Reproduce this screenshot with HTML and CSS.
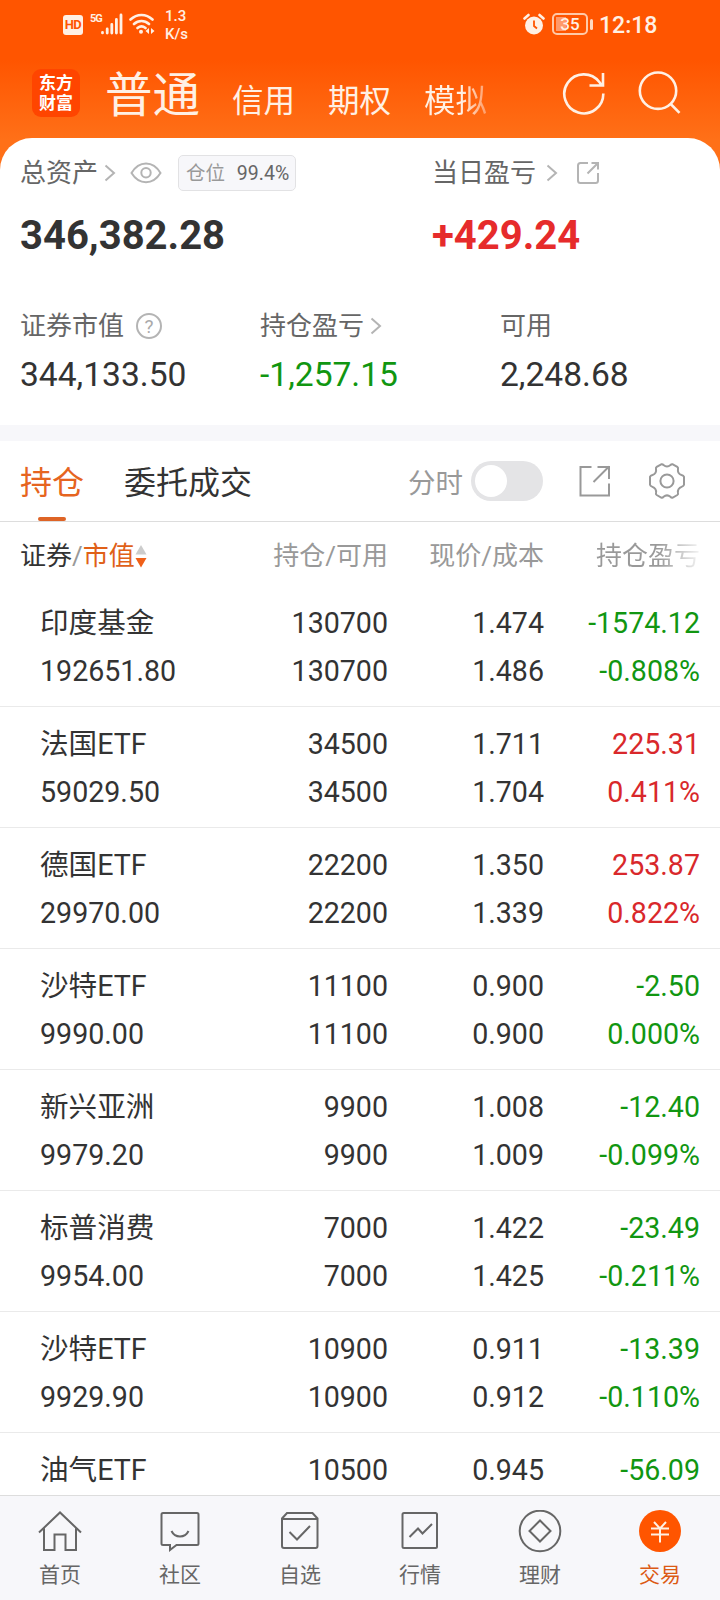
FILE: index.html
```html
<!DOCTYPE html>
<html lang="zh-CN">
<head>
    <meta charset="UTF-8">
    <meta name="viewport" content="width=device-width, initial-scale=1.0">
    <title>交易 - 持仓</title>
    <link rel="stylesheet" href="styles.css">
</head>
<body>
    <header>
        <!-- 状态栏 -->
        <div class="status-bar">
            <span class="hd">HD</span>
            <span class="net">5G</span>
            <svg class="signal" width="22" height="22" viewBox="0 0 22 22" fill="none" stroke="currentColor" stroke-width="2.8" stroke-linecap="round">
                <path d="M1.5 19.5v.4M6.2 16v4M10.8 11.5V20M15.4 6.5V20M20 2v18"/>
            </svg>
            <svg class="wifi" width="26" height="22" viewBox="0 0 26 22" fill="none" stroke="currentColor" stroke-width="2.6" stroke-linecap="round">
                <path d="M1.5 6.5C8 .4 17 .4 23.5 6.5M5 11c4.500-4 10.500-4 15 0M8.500 15c2.500-2 5.500-2 8 0"/>
                <circle cx="12" cy="18.700" r="2" fill="currentColor" stroke="none"/>
                <path d="M20 15v6l-3.500-3zM22 15v6l3.500-3z" fill="currentColor" stroke="none"/>
            </svg>
            <div class="speed">1.3<br>K/s</div>
            <svg class="alarm" width="22" height="22" viewBox="0 0 22 22">
                <circle cx="11" cy="12.500" r="9" fill="currentColor"/>
                <path d="M1.500 5.500L5.500 2M20.500 5.500L16.500 2" stroke="currentColor" stroke-width="2.600" stroke-linecap="round"/>
                <path d="M11 7.500v5.500l3 2.500" fill="none" stroke="#ff5500" stroke-width="1.800"/>
            </svg>
            <div class="battery"><span>35</span></div>
            <span class="time">12:18</span>
        </div>

        <div class="nav-top">
            <div class="logo">东方<br>财富</div>
            <div class="account-tabs">
                <span class="current">普通</span>
                <span>信用</span>
                <span>期权</span>
                <span class="fade">模拟</span>
            </div>
            <svg class="refresh" width="44" height="44" viewBox="0 0 44 44" fill="none" stroke="currentColor" stroke-width="2.600">
                <path d="M41.300 22.500A19.500 19.500 0 1 1 37.300 11L40 14.500M41 2v12.500H27.500"/>
            </svg>
            <svg width="44" height="44" viewBox="0 0 44 44" fill="none" stroke="currentColor" stroke-width="2.600">
                <circle cx="20" cy="19.700" r="18.200"/>
                <path d="M32.700 33L41.500 41.800"/>
            </svg>
        </div>
    </header>

    <main>
        <!-- 资产概况 -->
        <section class="assets">
            <div class="assets-main">
                <div>
                    <div class="label">
                        总资产
                        <svg class="arrow" width="12" height="18" viewBox="0 0 12 18"><path d="M1.500 1.500L10 9l-8.500 7.500"/></svg>
                        <svg class="eye" width="32" height="22" viewBox="0 0 32 22"><path d="M1.500 11C9-1.700 23-1.700 30.500 11 23 23.200 9 23.200 1.500 11z"/><circle cx="16" cy="10.800" r="4.700"/></svg>
                        <span class="badge">仓位 <b>99.4%</b></span>
                    </div>
                    <div class="total">346,382.28</div>
                </div>
                <div>
                    <div class="label">
                        当日盈亏
                        <svg class="arrow wide" width="12" height="18" viewBox="0 0 12 18"><path d="M1.500 1.500L10 9l-8.500 7.500"/></svg>
                        <svg class="share" width="24" height="24" viewBox="0 0 24 24"><path d="M12 2H4.500A2.500 2.500 0 0 0 2 4.500v15A2.500 2.500 0 0 0 4.500 22h15a2.500 2.500 0 0 0 2.500-2.500V12M11.500 12.500L22 2M15.500 2H22v6.500"/></svg>
                    </div>
                    <div class="total up">+429.24</div>
                </div>
            </div>
            <div class="assets-sub">
                <div>
                    <div class="label">证券市值 <span class="help">?</span></div>
                    <div class="value">344,133.50</div>
                </div>
                <div>
                    <div class="label">
                        持仓盈亏
                        <svg class="arrow" width="12" height="18" viewBox="0 0 12 18"><path d="M1.500 1.500L10 9l-8.500 7.500"/></svg>
                    </div>
                    <div class="value down">-1,257.15</div>
                </div>
                <div>
                    <div class="label">可用</div>
                    <div class="value">2,248.68</div>
                </div>
            </div>
        </section>

        <!-- 持仓 / 委托成交 -->
        <div class="tabs">
            <div class="tab active">持仓</div>
            <div class="tab">委托成交</div>
            <span class="switch-label">分时</span>
            <div class="switch"></div>
            <svg class="export" width="32" height="32" viewBox="0 0 32 32"><path d="M12.500 2H1.500v28.500H30V18.500M14.500 17L30 1.500M18.500 2H30v12"/></svg>
            <svg class="gear" width="38" height="38" viewBox="0 0 38 38">
                <path d="M13.2 2.300Q14.500 1.800 15.500 3Q19 6 22.500 3Q23.500 1.800 24.800 2.300L29.300 4.900Q30.400 5.700 30 7Q29.200 11.600 33.500 13Q35.600 13.500 36 14.800V22.800Q35.600 24.200 34 24.600Q29.200 26.500 30 30.800Q30.400 32.300 29.300 33L24.800 35.500Q23.500 36 22.500 34.800Q19 32 15.500 34.800Q14.500 36 13.200 35.500L8.700 33Q7.600 32.300 8 30.800Q8.800 26.500 4 24.600Q2.400 24.200 2 22.800V14.800Q2.400 13.500 4.500 13Q8.800 11.600 8 7Q7.600 5.700 8.700 4.900Z"/>
                <circle cx="19" cy="19" r="6.600"/>
            </svg>
        </div>

        <!-- 持仓列表 -->
        <div class="table-head">
            <div class="sort"><span class="dark">证券</span>/<span class="orange">市值</span><svg width="12" height="24" viewBox="0 0 12 24"><path d="M6 1l5.500 9.500H.5z" fill="#ccc"/><path d="M6 23.500l5.500-9.500H.5z" fill="#f06018"/></svg></div>
            <div>持仓/可用</div>
            <div>现价/成本</div>
            <div><span class="head-fade">持仓盈亏</span></div>
        </div>
        <div class="row">
            <div>印度基金<br>192651.80</div>
            <div>130700<br>130700</div>
            <div>1.474<br>1.486</div>
            <div class="down">-1574.12<br>-0.808%</div>
        </div>
        <div class="row">
            <div>法国ETF<br>59029.50</div>
            <div>34500<br>34500</div>
            <div>1.711<br>1.704</div>
            <div class="up">225.31<br>0.411%</div>
        </div>
        <div class="row">
            <div>德国ETF<br>29970.00</div>
            <div>22200<br>22200</div>
            <div>1.350<br>1.339</div>
            <div class="up">253.87<br>0.822%</div>
        </div>
        <div class="row">
            <div>沙特ETF<br>9990.00</div>
            <div>11100<br>11100</div>
            <div>0.900<br>0.900</div>
            <div class="down">-2.50<br>0.000%</div>
        </div>
        <div class="row">
            <div>新兴亚洲<br>9979.20</div>
            <div>9900<br>9900</div>
            <div>1.008<br>1.009</div>
            <div class="down">-12.40<br>-0.099%</div>
        </div>
        <div class="row">
            <div>标普消费<br>9954.00</div>
            <div>7000<br>7000</div>
            <div>1.422<br>1.425</div>
            <div class="down">-23.49<br>-0.211%</div>
        </div>
        <div class="row">
            <div>沙特ETF<br>9929.90</div>
            <div>10900<br>10900</div>
            <div>0.911<br>0.912</div>
            <div class="down">-13.39<br>-0.110%</div>
        </div>
        <div class="row">
            <div>油气ETF</div>
            <div>10500</div>
            <div>0.945</div>
            <div class="down">-56.09</div>
        </div>
    </main>

    <!-- 底部导航 -->
    <footer>
        <div class="item">
            <svg width="44" height="44" viewBox="0 0 44 44"><path d="M1 22.500L22 2.500l21 20M6 18.500V40h10.500V24.500h11V40H38V18.500"/></svg>
            首页
        </div>
        <div class="item">
            <svg width="44" height="44" viewBox="0 0 44 44"><path d="M5 3h34a1.500 1.500 0 0 1 1.500 1.500v29A1.500 1.500 0 0 1 39 35H18.500L12 40v-5H5a1.500 1.500 0 0 1-1.500-1.500v-29A1.500 1.500 0 0 1 5 3zM13.500 21c3.500 7.300 13.500 7.300 17 0"/></svg>
            社区
        </div>
        <div class="item">
            <svg width="44" height="44" viewBox="0 0 44 44"><path d="M4 8.500L9 3h25.500l5 5.500V36a2 2 0 0 1-2 2H6a2 2 0 0 1-2-2zM4 9H39.500M11.500 22l7.500 7.500L32 16"/></svg>
            自选
        </div>
        <div class="item">
            <svg width="44" height="44" viewBox="0 0 44 44"><rect x="4.500" y="3" width="34.500" height="35" rx="1.500"/><path d="M11.500 27l8.500-8.500 4.500 5L34 14"/></svg>
            行情
        </div>
        <div class="item">
            <svg width="44" height="44" viewBox="0 0 44 44"><circle cx="22" cy="21" r="20.300"/><path d="M22 10.500L32.500 21 22 31.500 11.500 21z"/></svg>
            理财
        </div>
        <div class="item on">
            <svg width="44" height="44" viewBox="0 0 44 44"><circle class="coin" cx="22" cy="21" r="21"/><path class="yen" d="M16 12L22 18.500l6-6.500M13 18.500h18M13 24.500h18M22 18.500v14"/></svg>
            交易
        </div>
    </footer>
</body>
</html>
```

FILE: styles.css
```css
* {
    box-sizing: border-box;
}

body {
    font-family: Roboto, "Noto Sans CJK SC", sans-serif;
    margin: 0;
    width: 720px;
    height: 1600px;
    overflow: hidden;
    display: flex;
    flex-direction: column;
    background: linear-gradient(#ff5500 60px, #ff7018 140px);
    color: #333;
}

svg {
    flex: none;
}

header {
    height: 138px;
    flex: none;
    color: #fff0e4;
}

.status-bar {
    display: flex;
    align-items: center;
    height: 48px;
    padding-left: 63px;
}

.hd {
    width: 20px;
    height: 20px;
    margin-top: 2px;
    border-radius: 3px;
    background-color: #fff0e4;
    color: #ff5500;
    font-size: 13px;
    font-weight: bold;
    line-height: 20px;
    text-align: center;
    letter-spacing: -0.5px;
}

.net {
    font-size: 11px;
    font-weight: bold;
    letter-spacing: -1px;
    margin: 0 0 12px 7px;
    width: 11px;
}

.signal {
    margin-left: 0;
}

.wifi {
    margin-left: 6px;
}

.speed {
    font-size: 15px;
    font-weight: 500;
    line-height: 18px;
    margin: 1px 0 0 10px;
    width: 41px;
}

.alarm {
    margin-left: 317px;
}

.battery {
    display: flex;
    align-items: center;
    width: 36px;
    height: 22px;
    margin-left: 7px;
    padding: 2px;
    border: 2px solid #ffc9a8;
    border-radius: 5px;
    position: relative;
}

.battery span {
    width: 28px;
    font-size: 17px;
    font-weight: 500;
    line-height: 14px;
    text-align: center;
    background: linear-gradient(to right, #ff9a6a 10px, transparent 10px);
}

.battery::after {
    content: "";
    position: absolute;
    right: -7px;
    top: 4px;
    width: 3px;
    height: 11px;
    border-radius: 2px;
    background-color: #ffd9c0;
}

.time {
    font-size: 23px;
    font-weight: 500;
    margin: 2px 0 0 11px;
}

.nav-top {
    display: flex;
    align-items: center;
    height: 90px;
    padding-left: 32px;
}

.logo {
    width: 48px;
    height: 48px;
    padding-top: 4px;
    border-radius: 9px;
    background-color: #ff4500;
    color: #fff;
    font-size: 17px;
    font-weight: bold;
    line-height: 20px;
    text-align: center;
}

.account-tabs {
    display: flex;
    align-items: baseline;
    gap: 33px;
    margin-left: 25px;
    padding-top: 11px;
    width: 457px;
    font-size: 31.5px;
    line-height: 60px;
}

.account-tabs .current {
    font-size: 47.5px;
    margin-right: -1px;
}

.fade {
    background: linear-gradient(to right, #fff0e4 60%, #ff9a64);
    background-clip: text;
    -webkit-background-clip: text;
    color: transparent;
}

.refresh {
    margin-right: 32px;
}

main {
    flex: 1;
    min-height: 0;
    overflow: hidden;
    background-color: #fff;
    border-radius: 32px 32px 0 0;
}

.assets {
    height: 303px;
    padding: 16px 20px 0;
    border-bottom: 16px solid #f7f7fa;
}

.assets-main {
    display: grid;
    grid-template-columns: 412px 1fr;
    height: 153px;
}

.assets-sub {
    display: grid;
    grid-template-columns: 240px 240px 1fr;
}

.label {
    display: flex;
    align-items: center;
    height: 38px;
    font-size: 26px;
    line-height: 38px;
    color: #666;
}

.label svg {
    fill: none;
    stroke: #b4b4b4;
    stroke-width: 2;
}

.arrow {
    margin-left: 6px;
}

.arrow.wide {
    margin-left: 10px;
}

.eye {
    margin-left: 14px;
}

.share {
    margin-left: 18px;
}

.badge {
    height: 36px;
    margin-left: 16px;
    padding: 0 6px 0 7px;
    border: 1px solid #e2e2e4;
    border-radius: 5px;
    background-color: #f7f7fa;
    color: #999;
    font-size: 19.5px;
    line-height: 36px;
}

.badge b {
    margin-left: 7px;
    font-weight: normal;
    color: #666;
}

.help {
    width: 26px;
    height: 26px;
    margin-left: 12px;
    border: 2px solid #b4b4b4;
    border-radius: 50%;
    color: #aaa;
    font-size: 19px;
    line-height: 23px;
    text-align: center;
}

.total {
    margin-top: 19px;
    font-size: 40px;
    font-weight: bold;
    line-height: 50px;
}

.value {
    margin-top: 9px;
    font-size: 33.6px;
    line-height: 41px;
}

.up {
    color: #d9282b;
}

.total.up {
    color: #e62b2b;
}

.down {
    color: #119611;
}

.tabs {
    display: flex;
    align-items: center;
    height: 81px;
    padding-left: 20px;
    border-bottom: 1px solid #ddd;
    font-size: 32px;
}

.tab {
    height: 80px;
    margin-right: 40px;
    line-height: 84px;
}

.tab.active {
    color: #e66420;
}

.tab.active::after {
    content: "";
    display: block;
    width: 28px;
    height: 4px;
    margin: -8px auto 0;
    border-radius: 2px;
    background-color: #de6426;
}

.switch-label {
    margin-left: 116px;
    font-size: 27.5px;
    color: #999;
}

.switch {
    width: 72px;
    height: 40px;
    margin-left: 8px;
    padding: 4px;
    border-radius: 20px;
    background-color: #e4e4e6;
}

.switch::before {
    content: "";
    display: block;
    width: 32px;
    height: 32px;
    border-radius: 50%;
    background-color: #fff;
}

.export,
.gear {
    fill: none;
    stroke: #999;
    stroke-width: 2;
}

.export {
    margin-left: 36px;
}

.gear {
    margin-left: 37px;
}

.table-head,
.row {
    display: grid;
    grid-template-columns: 1fr 150px 156px 156px;
    text-align: right;
}

.table-head {
    height: 64px;
    padding: 0 20px;
    font-size: 26px;
    line-height: 68px;
    color: #999;
}

.sort {
    display: flex;
    align-items: center;
}

.dark {
    color: #333;
}

.orange {
    color: #e06018;
}

.head-fade {
    background: linear-gradient(to right, #999 60%, #f4f4f4);
    background-clip: text;
    -webkit-background-clip: text;
    color: transparent;
}

.row {
    height: 121px;
    padding: 13px 20px 11px 40px;
    border-bottom: 1px solid #eaeaea;
    font-size: 28.6px;
    line-height: 48px;
}

.row div:first-child {
    text-align: left;
}

footer {
    display: grid;
    grid-template-columns: repeat(6, 1fr);
    flex: none;
    height: 105px;
    border-top: 1px solid #ddd;
    background-color: #f7f7fa;
}

.item {
    display: flex;
    flex-direction: column;
    align-items: center;
    padding-top: 14px;
    font-size: 21px;
    line-height: 42px;
    color: #666;
}

.item svg {
    fill: none;
    stroke: #666;
    stroke-width: 2;
}

.item.on {
    color: #dc5a14;
}

.item .coin {
    fill: #ff5500;
    stroke: none;
}

.item .yen {
    stroke: #fff0e4;
}
```
